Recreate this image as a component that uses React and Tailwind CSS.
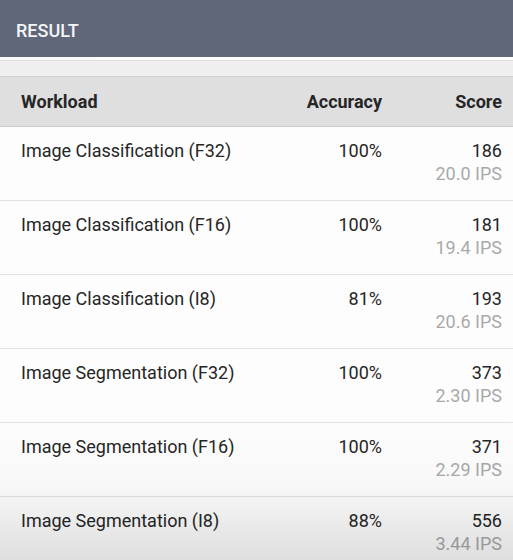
import React from "react";

const rows = [
  ["Image Classification (F32)", "100%", "186", "20.0 IPS"],
  ["Image Classification (F16)", "100%", "181", "19.4 IPS"],
  ["Image Classification (I8)", "81%", "193", "20.6 IPS"],
  ["Image Segmentation (F32)", "100%", "373", "2.30 IPS"],
  ["Image Segmentation (F16)", "100%", "371", "2.29 IPS"],
  ["Image Segmentation (I8)", "88%", "556", "3.44 IPS"],
];

export default function App() {
  return (
    <div
      className="relative w-[513px] h-[560px] overflow-hidden bg-[#fdfdfd]"
      style={{ fontFamily: "Roboto, 'Liberation Sans', sans-serif" }}
    >
      <div className="h-[57px] bg-[#5f6779] flex items-center">
        <div className="pl-4 text-[18px] font-medium text-[#f4f5f7] pt-[3px]">RESULT</div>
      </div>
      <div className="h-[3px] w-[96px] bg-[#fafafa]" />
      <div className="h-[17px] bg-[#efefef] border-t border-[#dcdcdc] border-b border-b-[#cfcfcf]" />
      <div className="h-[50px] bg-[#dfdfdf] border-b border-[#cbcbcb] flex items-center text-[18px] font-bold text-[#262626]">
        <div className="pl-[21px] flex-1">Workload</div>
        <div className="w-[120px] text-right">Accuracy</div>
        <div className="w-[131px] text-right pr-[11px]">Score</div>
      </div>
      {rows.map(([name, acc, score, ips]) => (
        <div
          key={name}
          className="h-[74px] border-b border-[#e2e2e2] flex text-[18px] text-[#262626]"
        >
          <div className="pl-[21px] flex-1 pt-[12px] leading-[24px]">{name}</div>
          <div className="w-[120px] text-right pt-[12px] leading-[24px]">{acc}</div>
          <div className="w-[131px] text-right pr-[11px] pt-[12px] leading-[24px]">
            <div>{score}</div>
            <div className="text-[#a9a9a9] -mt-[1px]">{ips}</div>
          </div>
        </div>
      ))}
      <div className="pointer-events-none absolute left-0 right-0 bottom-0 h-[150px] bg-gradient-to-b from-[rgba(0,0,0,0)] via-[rgba(0,0,0,0.02)] to-[rgba(0,0,0,0.12)]" />
    </div>
  );
}
